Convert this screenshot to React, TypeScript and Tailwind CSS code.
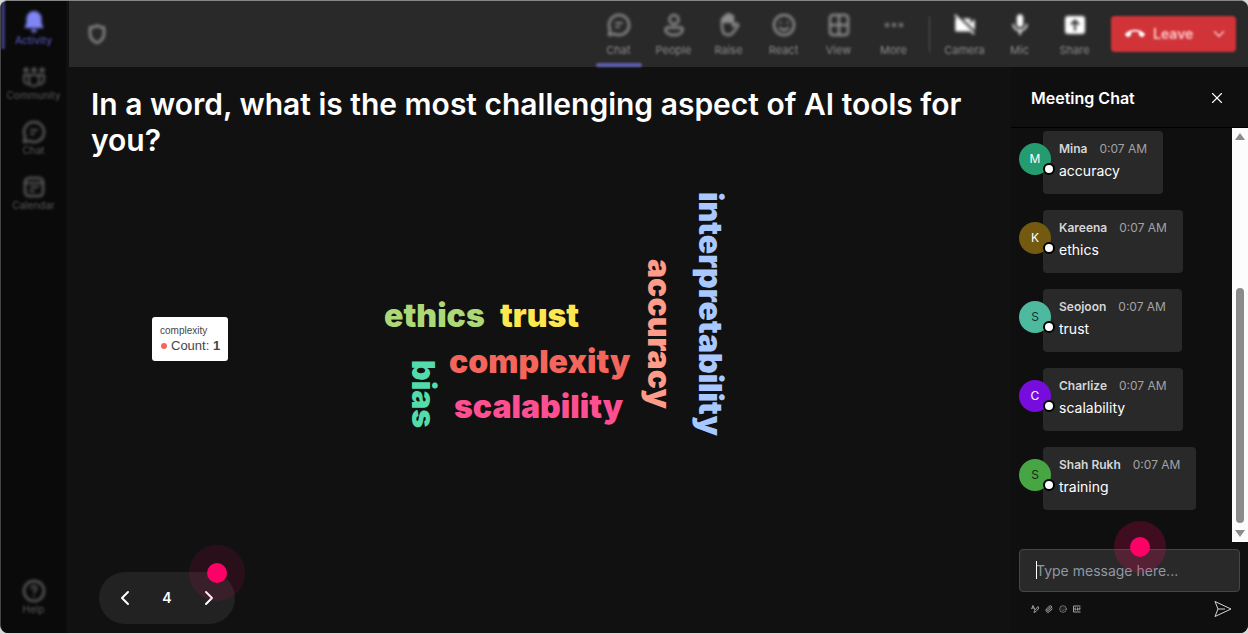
import type { ReactNode } from "react";
import { ChevronDown, ChevronLeft, ChevronRight, Paperclip, Smile, X } from "lucide-react";
import { MdCallEnd, MdMic, MdVideocamOff } from "react-icons/md";

function Icon({ children }: { children: ReactNode }) {
  return (
    <svg
      viewBox="0 0 24 24"
      className="size-6 blur-[1px]"
      fill="none"
      stroke="currentColor"
      strokeWidth="2.500"
      strokeLinecap="round"
      strokeLinejoin="round"
      aria-hidden="true"
    >
      {children}
    </svg>
  );
}

const icons = {
  bell: (
    <Icon>
      <path
        d="M12 1a7.500 7.500 0 0 0-7.500 7.500V13L2.500 18h19l-2-5V8.500A7.500 7.500 0 0 0 12 1ZM9 19.500a3 3 0 0 0 6 0Z"
        fill="currentColor"
        stroke="none"
      />
    </Icon>
  ),
  community: (
    <Icon>
      <path d="M4 5h.1M12 5h.1M20 5h.1" strokeWidth="5" />
      <path d="M7 10h10v6a5 5 0 0 1-10 0ZM7 10H2v5a4 4 0 0 0 5 4M17 10h5v5a4 4 0 0 1-5 4" strokeWidth="2" />
    </Icon>
  ),
  chat: (
    <Icon>
      <path d="M12 2a10 10 0 1 1-4.700 18.800L2 22l1.200-5.300A10 10 0 0 1 12 2Z" />
      <path d="M9 10h6M9 14h3" strokeWidth="2" />
    </Icon>
  ),
  calendar: (
    <Icon>
      <rect x="3" y="3" width="18" height="18" rx="4" />
      <path d="M3 8h18M9 12h7M8 16h4" strokeWidth="2" />
    </Icon>
  ),
  help: (
    <Icon>
      <circle cx="12" cy="12" r="10" />
      <path d="M9.500 9.500a2.500 2.500 0 1 1 3.800 2.100c-.9.600-1.300 1.100-1.300 2M12 17v.1" strokeWidth="2" />
    </Icon>
  ),
  people: (
    <Icon>
      <circle cx="12" cy="6.500" r="4.500" />
      <path d="M5.500 14.500h13a2 2 0 0 1 2 2c0 3.500-4 5.500-8.500 5.500s-8.500-2-8.500-5.500a2 2 0 0 1 2-2Z" />
    </Icon>
  ),
  raise: (
    <Icon>
      <path d="M5 13V6.500a1.500 1.500 0 0 1 2.500-1V4a1.500 1.500 0 0 1 2.500-1V2.500a1.500 1.500 0 0 1 3 0V4a1.500 1.500 0 0 1 3 0v9l3-2a1.500 1.500 0 0 1 2 2l-4.500 6c-1.500 2-3 3-5.500 3-4 0-6-3-6-9Z" />
      <path d="M5 6h2V3h3V2h3v2h3v6H5z" fill="currentColor" stroke="none" />
    </Icon>
  ),
  react: (
    <Icon>
      <circle cx="12" cy="12" r="10" />
      <path d="M8.500 9.500v.1M15.500 9.500v.1M8 15c2 2.500 6 2.500 8 0" />
    </Icon>
  ),
  view: (
    <Icon>
      <rect x="3" y="2" width="18" height="20" rx="3" />
      <path d="M12 3v18M3 12h18" />
    </Icon>
  ),
  more: (
    <Icon>
      <path d="M5 12h.1M12 12h.1M19 12h.1" strokeWidth="4" />
    </Icon>
  ),
  share: (
    <Icon>
      <rect x="2" y="3" width="20" height="18" rx="3" fill="currentColor" stroke="none" />
      <path d="M12 17V8M8.500 11 12 7.500l3.500 3.500" stroke="#292929" strokeWidth="2" />
    </Icon>
  ),
};

const railItems = [
  { label: "Community", icon: icons.community },
  { label: "Chat", icon: icons.chat },
  { label: "Calendar", icon: icons.calendar },
];

const meetingItems = [
  { label: "People", icon: icons.people },
  { label: "Raise", icon: icons.raise },
  { label: "React", icon: icons.react },
  { label: "View", icon: icons.view },
  { label: "More", icon: icons.more },
];

const deviceItems = [
  { label: "Camera", icon: <MdVideocamOff className="size-[26px] -my-px blur-[1px]" /> },
  { label: "Mic", icon: <MdMic className="size-[26px] -my-px blur-[1px]" /> },
  { label: "Share", icon: icons.share },
];

const words = [
  { text: "ethics", style: "left-[317px] top-[143px] text-[#acd878]" },
  { text: "trust", style: "left-[433px] top-[143px] text-[#ffe750]" },
  { text: "complexity", style: "left-[382px] top-[189px] text-[#f4665c]" },
  { text: "scalability", style: "left-[387px] top-[234px] text-[#ff4f93]" },
  { text: "bias", style: "left-[341px] top-[202px] text-[#53dbab] [writing-mode:vertical-rl]" },
  { text: "accuracy", style: "left-[577px] top-[101px] text-[#ff9b89] [writing-mode:vertical-rl]" },
  { text: "interpretability", style: "left-[628px] top-[34px] text-[#a9c8ff] [writing-mode:vertical-rl]" },
];

const messages = [
  { name: "Mina", text: "accuracy", avatar: "bg-[#259b70] text-white" },
  { name: "Kareena", text: "ethics", avatar: "bg-[#735a10] text-white" },
  { name: "Seojoon", text: "trust", avatar: "bg-[#4dbaa0] text-[#16302a]" },
  { name: "Charlize", text: "scalability", avatar: "bg-[#760ddc] text-white" },
  { name: "Shah Rukh", text: "training", avatar: "bg-[#48a543] text-[#14290f]" },
];

function Rail() {
  return (
    <nav className="w-[66px] shrink-0 border-r border-[#0e0e0e] bg-[#0a0a0a] text-[10px] leading-3 text-[#5a5a5a]">
      <div className="flex h-full flex-col gap-[7px] pb-[18px] blur-[1px]">
        <button className="flex h-12 flex-col items-center justify-end border-l-4 border-[#383873] pb-[3px] pr-1 font-semibold text-[#4848a0]">
          <span className="text-[#7f85f5]">{icons.bell}</span>
          Activity
        </button>
        {railItems.map((item) => (
          <button key={item.label} className="flex h-12 flex-col items-center justify-end pb-[3px]">
            {item.icon}
            {item.label}
          </button>
        ))}
        <button className="mt-auto flex flex-col items-center">
          {icons.help}
          Help
        </button>
      </div>
    </nav>
  );
}

function TopBar() {
  return (
    <header className="ml-[2px] h-[66px] bg-[#292929] text-[#8c8c8c]">
      <div className="flex h-full items-center pl-4 pr-3 text-[11px] leading-4 blur-[1px]">
        <Icon>
          <path d="M12 3.500c2 1.500 4 2 7 2V12c0 4-3 7-7 9-4-2-7-5-7-9V5.500c3 0 5-.5 7-2Z" />
        </Icon>
        <div className="ml-auto flex h-full">
          <button className="flex w-[55px] flex-col items-center pt-3">
            {icons.chat}
            <span className="mt-[5px]">Chat</span>
            <span className="mt-auto h-1 w-[46px] rounded bg-[#5c5fae]" />
          </button>
          {meetingItems.map((item) => (
            <button key={item.label} className="flex w-[55px] flex-col items-center pt-3">
              {item.icon}
              <span className="mt-[5px]">{item.label}</span>
            </button>
          ))}
        </div>
        <div className="ml-2 mr-[7px] h-9 w-px bg-[#555555]" />
        <div className="flex h-full">
          {deviceItems.map((item) => (
            <button key={item.label} className="flex w-[55px] flex-col items-center pt-3">
              <span className="text-white">{item.icon}</span>
              <span className="mt-[5px]">{item.label}</span>
            </button>
          ))}
        </div>
        <button className="ml-[9px] flex h-9 w-[125px] items-center rounded bg-[#d13438] pl-[14px] pr-2 text-sm font-semibold text-[#ffc9cc]">
          <MdCallEnd className="mr-2 size-5 text-white" />
          Leave
          <ChevronDown className="ml-auto size-[18px]" />
        </button>
      </div>
    </header>
  );
}

function WordCloud() {
  return (
    <div className="relative min-h-[400px] flex-1">
      {words.map((word) => (
        <span
          key={word.text}
          className={`absolute text-[32px] font-black leading-[30px] whitespace-nowrap ${word.style}`}
        >
          {word.text}
        </span>
      ))}
      <div
        role="tooltip"
        className="absolute left-[85px] top-[159px] rounded-[3px] bg-white px-2 py-[7px] font-['Liberation_Sans',Arial,sans-serif] text-[#464646]"
      >
        <p className="text-[10px] leading-[14px]">complexity</p>
        <p className="flex items-center text-[13px] leading-4">
          <span className="ml-px mr-1 size-[6px] rounded-full bg-[#f4665c]" />
          Count:&nbsp;<b>1</b>
        </p>
      </div>
    </div>
  );
}

function Pager() {
  return (
    <div className="absolute bottom-[9px] left-8 flex h-[52px] w-[136px] items-center justify-between rounded-full bg-[#222222] px-3 text-white">
      <button aria-label="Previous" className="p-[2px]">
        <ChevronLeft className="size-6" />
      </button>
      <span className="text-sm font-semibold">4</span>
      <button aria-label="Next" className="p-[2px]">
        <ChevronRight className="size-6" />
      </button>
      <span className="pointer-events-none absolute -right-[10px] -top-[27px] flex size-14 items-center justify-center rounded-full bg-[#ff0066]/10">
        <span className="size-5 rounded-full bg-[#ff0066]" />
      </span>
    </div>
  );
}

function MeetingChat() {
  return (
    <aside className="flex w-[237px] shrink-0 flex-col bg-[#0f0f0f]">
      <div className="flex h-[61px] items-center justify-between border-b border-black pl-5 pr-[22px] pt-px text-white">
        <h2 className="text-base font-semibold">Meeting Chat</h2>
        <button aria-label="Close chat">
          <X className="size-[18px]" strokeWidth={1.5} />
        </button>
      </div>

      <div className="flex flex-1">
        <ul className="flex flex-1 flex-col gap-4 pl-2 pt-[3px]">
          {messages.map((message) => (
            <li key={message.name} className="flex">
              <div className={`relative z-10 mt-3 flex size-8 shrink-0 items-center justify-center rounded-full text-xs ${message.avatar}`}>
                {message.name[0]}
                <span className="absolute -right-1 bottom-0 size-3 rounded-full border-2 border-black bg-white" />
              </div>
              <div className="-ml-2 h-[63px] rounded bg-[#292929] px-4 pt-[10px]">
                <p className="flex gap-3 whitespace-nowrap text-xs leading-4 text-[#a3a3a3]">
                  <span className="font-semibold text-[#d6d6d6]">{message.name}</span>
                  0:07 AM
                </p>
                <p className="mt-1 text-sm leading-5 text-white">{message.text}</p>
              </div>
            </li>
          ))}
        </ul>
        <div className="flex w-4 flex-col items-center bg-[#fcfcfc] py-[5px]" aria-hidden="true">
          <svg viewBox="0 0 10 7" className="h-[7px] w-[10px]" fill="#8b8b8b">
            <path d="M5 0 10 7H0Z" />
          </svg>
          <span className="mb-[7px] mt-auto h-[235px] w-2 rounded-full bg-[#8b8b8b]" />
          <svg viewBox="0 0 10 7" className="h-[7px] w-[10px]" fill="#8b8b8b">
            <path d="M0 0h10L5 7Z" />
          </svg>
        </div>
      </div>

      <div className="relative px-2 pt-[7px]">
        <input
          aria-label="Type message here"
          placeholder="Type message here..."
          className="h-[43px] w-full rounded border border-[#464646] bg-[#292929] px-4 text-sm text-white placeholder:text-[#8f98a3]"
        />
        <span className="absolute left-[25px] top-[19px] h-[18px] w-px bg-white" />
        <span className="pointer-events-none absolute left-[103px] -top-[21px] flex size-[52px] items-center justify-center rounded-full bg-[#ff0066]/20">
          <span className="size-5 rounded-full bg-[#ff0066]" />
        </span>
      </div>
      <div className="flex h-[41px] items-center gap-[6px] pb-2 pl-5 pr-4 text-[#a0a0a0]">
        <button aria-label="Format">
          <svg viewBox="0 0 16 16" className="size-2" fill="none" stroke="currentColor" strokeWidth="2" aria-hidden="true">
            <path d="M1 8 4 1l4 9M2 6h4M14 3 7 11l-1 4 4-2 6-7Z" />
          </svg>
        </button>
        <button aria-label="Attach">
          <Paperclip className="size-2" strokeWidth={3} />
        </button>
        <button aria-label="Emoji">
          <Smile className="size-2" />
        </button>
        <button aria-label="GIF">
          <svg viewBox="0 0 16 16" className="size-2" fill="none" stroke="currentColor" strokeWidth="2" aria-hidden="true">
            <path d="M15 2H1v12h14M6 6H4v4h2V8M9 5v6M12 11V6h3M12 8h3" />
          </svg>
        </button>
        <button aria-label="Send" className="ml-auto text-[#d6d6d6]">
          <svg viewBox="0 0 18 18" className="size-[18px]" fill="none" stroke="currentColor" strokeLinejoin="round" aria-hidden="true">
            <path d="M1 1.500 17 9 1 16.500 4 9ZM4 9h7" />
          </svg>
        </button>
      </div>
    </aside>
  );
}

export default function App() {
  return (
    <div className="flex min-h-screen bg-[#d8d8d8] pb-px font-['Inter',sans-serif]">
      <div className="flex flex-1 overflow-hidden rounded-lg border-l border-t border-l-[#444444] border-t-[#858585] bg-[#111111]">
        <Rail />
        <div className="flex min-w-0 flex-1 flex-col">
          <TopBar />
          <div className="flex flex-1">
            <main className="relative flex min-w-0 flex-1 flex-col">
              <h1 className="pl-6 pr-8 pt-[19px] text-[30px] font-semibold leading-9 text-white">
                In a word, what is the most challenging aspect of AI tools for you?
              </h1>
              <WordCloud />
              <Pager />
            </main>
            <MeetingChat />
          </div>
        </div>
      </div>
    </div>
  );
}
